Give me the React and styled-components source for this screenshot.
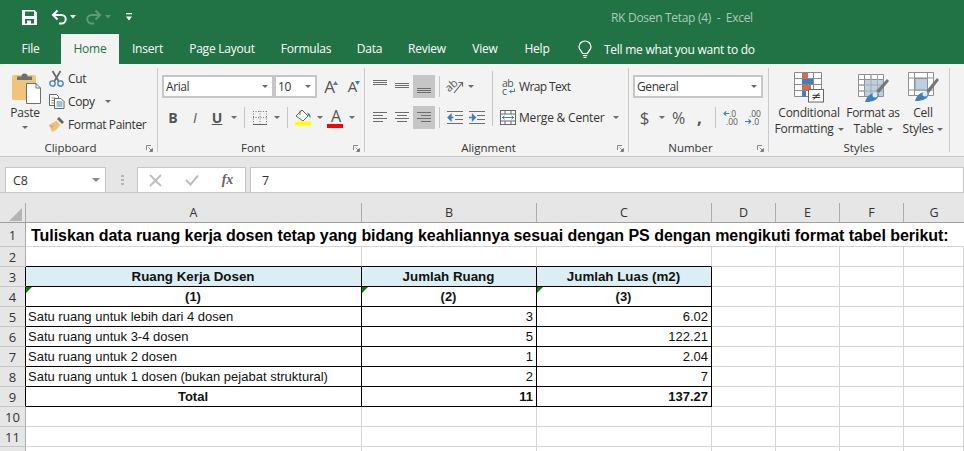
import React from 'react';
import styled, { createGlobalStyle } from 'styled-components';

const UI = '"Open Sans", "Noto Sans", sans-serif';
const GREEN = '#217346';
const GRID = '#d4d4d4';

const Global = createGlobalStyle`
  html, body { margin: 0; padding: 0; background: #fff; overflow: hidden; }
  #root { width: 964px; height: 451px; overflow: hidden; }
`;
const Page = styled.div`width:964px;height:451px;overflow:hidden;font-family:${UI};color:#333;`;

/* title bar */
const TitleBar = styled.div`height:34px;background:${GREEN};display:flex;align-items:center;padding-left:22px;`;
const Qat = styled.div`display:flex;align-items:center;width:589px;`;
const QatBtn = styled.span`display:inline-flex;margin-left:${p => p.$ml || 0}px;`;
const DocTitle = styled.div`font-size:12px;letter-spacing:-.3px;color:#a9cbb8;white-space:pre;`;

/* tabs */
const TabBar = styled.div`height:30px;background:${GREEN};display:flex;`;
const Tab = styled.div`
  width:${p => p.$w}px;flex:none;text-align:center;font-size:12px;line-height:29px;letter-spacing:-.22px;
  color:${p => p.$active ? GREEN : '#fff'};background:${p => p.$active ? '#f3f3f3' : 'transparent'};
`;
const TellMe = styled.div`display:flex;align-items:center;gap:12px;margin-left:15px;font-size:12px;letter-spacing:-.26px;color:#fff;`;

/* ribbon */
const Ribbon = styled.div`height:92px;background:#f3f3f3;border-bottom:1px solid #c9c9c9;display:flex;overflow:hidden;`;
const Group = styled.div`width:${p => p.$w}px;flex:none;display:flex;flex-direction:column;`;
const GroupBody = styled.div`flex:1;display:flex;min-height:0;padding-left:${p => p.$pl || 0}px;`;
const GroupFoot = styled.div`height:16px;display:flex;align-items:center;flex:none;`;
const GroupLabel = styled.div`flex:1;text-align:center;font-size:11.5px;line-height:16px;color:#333;`;
const Launcher = styled.div`width:16px;flex:none;display:flex;justify-content:center;`;
const Divider = styled.div`width:1px;flex:none;margin:4px 0;background:#cacaca;`;

const Big = styled.div`width:${p => p.$w}px;flex:none;display:flex;flex-direction:column;align-items:center;padding-top:8px;`;
const BigIcon = styled.div`
  height:33px;flex:none;display:flex;align-items:${p => p.$align || 'flex-start'};justify-content:center;
  padding-left:${p => p.$pl || 0}px;
`;
const BigText = styled.div`font-size:12px;line-height:16px;color:#333;white-space:nowrap;letter-spacing:-.25px;display:flex;align-items:center;gap:4px;`;
const PasteCaret = styled.div`display:flex;margin-top:5px;`;
const SmallCol = styled.div`display:flex;flex-direction:column;padding-top:3px;margin-left:-1px;`;
const SmallRow = styled.div`height:23px;display:flex;align-items:center;font-size:12px;letter-spacing:-.38px;color:#333;white-space:nowrap;`;
const SmallIcon = styled.div`width:19px;flex:none;display:flex;`;
const Stack = styled.div`display:flex;flex-direction:column;gap:8px;padding-top:11px;`;
const Row = styled.div`height:23px;display:flex;align-items:center;`;
const Combo = styled.div`
  width:${p => p.$w}px;height:23px;box-sizing:border-box;flex:none;background:#fff;border:2px solid #c6c6c6;
  display:flex;align-items:center;justify-content:space-between;padding:0 4px 0 2px;font-size:12px;letter-spacing:-.4px;color:#333;
`;
const Cell = styled.div`
  width:${p => p.$w}px;height:23px;flex:none;display:flex;align-items:center;justify-content:center;
  background:${p => p.$on ? '#c6c6c6' : 'transparent'};
  font-size:${p => p.$fs || 13}px;color:${p => p.$c || '#555'};font-weight:${p => p.$b ? 700 : 400};
  font-style:${p => p.$i ? 'italic' : 'normal'};text-decoration:${p => p.$u ? 'underline' : 'none'};
`;
const Sep = styled.div`width:1px;height:${p => p.$h || 23}px;flex:none;background:#c6c6c6;margin:0 ${p => p.$m ?? 4}px 0 ${p => p.$ml ?? 4}px;`;
const TallSep = styled.div`width:1px;height:55px;margin:7px 0 0 4px;flex:none;background:#c6c6c6;`;
const Caret = styled.span`
  display:inline-block;width:0;height:0;flex:none;border-left:3px solid transparent;border-right:3px solid transparent;
  border-top:3px solid #6a6a6a;margin-left:${p => p.$ml || 0}px;
`;
const NameCaret = styled(Caret)`border-width:4px 4px 0;border-top-color:#8a8a8a;margin-right:5px;`;
const Swatch = styled.div`display:flex;flex-direction:column;align-items:center;line-height:14px;`;
const Bar = styled.div`width:16px;height:4px;background:${p => p.$c};`;
const WrapCol = styled.div`display:flex;flex-direction:column;gap:8px;padding-top:11px;padding-left:5px;`;
const WrapRow = styled.div`height:23px;display:flex;align-items:center;font-size:12px;letter-spacing:${p => p.$ls ?? -.2}px;color:#333;white-space:nowrap;`;
const WrapIcon = styled.div`width:21px;flex:none;display:flex;box-sizing:border-box;padding-left:${p => p.$pl || 0}px;`;
const Grow = styled.span`font-size:${p => p.$fs}px;color:#555;line-height:1;margin-right:-2px;`;

/* formula bar */
const FormulaBar = styled.div`
  height:36px;box-sizing:border-box;background:#e6e6e6;border-bottom:1px solid #c6c6c6;padding:10px 0 0 5px;display:flex;
`;
const Field = styled.div`
  height:25px;box-sizing:border-box;background:#fff;border:1px solid #c6c6c6;border-bottom:0;
  display:flex;align-items:center;font-size:13px;color:#333;flex:${p => p.$grow ? 1 : 'none'};
  width:${p => p.$w ? p.$w + 'px' : 'auto'};margin-left:${p => p.$ml || 0}px;
`;
const NameText = styled.span`flex:1;padding-left:${p => p.$pl || 7}px;font-size:12.5px;`;
const FxBtn = styled.div`width:${p => p.$w}px;flex:none;display:flex;justify-content:center;align-items:center;`;
const Fx = styled.span`font-family:"Liberation Serif",serif;font-style:italic;font-weight:700;font-size:14px;color:#666;`;
const Grip = styled.div`width:3px;height:11px;margin:8px 0 0 15px;flex:none;background:repeating-linear-gradient(#b4b4b4 0 2px,transparent 2px 4px);`;

/* sheet */
const Sheet = styled.div`
  display:grid;
  grid-template-columns:26px 336px 175px 175px 64px 64px 64px 60px;
  grid-template-rows:30px 24px repeat(11,20px);
  background:#fff;
`;
const ColHead = styled.div`background:#e6e6e6;border-bottom:1px solid #a0a0a0;box-sizing:border-box;padding-top:10px;display:flex;`;
const CornerBox = styled.div`flex:1;border-right:1px solid #ababab;display:flex;align-items:flex-end;justify-content:flex-end;padding:0 3px 1px 0;`;
const ColLabel = styled.div`flex:1;border-right:${p => p.$last ? 0 : '1px solid #ababab'};text-align:center;font-size:12.5px;line-height:20px;color:#333;`;
const RowHead = styled.div`
  background:#e6e6e6;box-sizing:border-box;text-align:center;font-size:13px;color:#333;line-height:${p => p.$tall ? 25 : 20}px;
  border-right:1px solid ${p => p.$black ? '#000' : '#ababab'};border-bottom:1px solid #c6c6c6;
`;
const Title = styled.div`
  grid-column:2 / -1;box-sizing:border-box;border-bottom:1px solid ${GRID};padding-left:5px;
  font:700 16px/25px "Liberation Sans",Arial,sans-serif;letter-spacing:-.043px;color:#000;white-space:nowrap;
`;
const Td = styled.div`
  position:relative;box-sizing:border-box;white-space:nowrap;overflow:hidden;
  font:${p => p.$b ? 700 : 400} ${p => p.$fs || 13}px/20px "Liberation Sans",Arial,sans-serif;color:#111;
  background:${p => p.$bg || '#fff'};text-align:${p => p.$a || 'left'};
  padding:0 3px 0 2px;
  border-right:1px solid ${p => p.$box ? '#000' : GRID};
  border-bottom:1px solid ${p => (p.$box || p.$under) ? '#000' : GRID};
  ${p => p.$flag ? `&::before{content:"";position:absolute;left:0;top:0;border-top:6px solid #0f7b0f;border-right:6px solid transparent;}` : ''}
`;

/* icons */
const Svg = ({ w, h, children }) => <svg width={w} height={h} viewBox={`0 0 ${w} ${h}`} style={{ display: 'block', flex: 'none', overflow: 'visible' }}>{children}</svg>;

const SaveIcon = () => <Svg w={15} h={15}><path fill="#fff" fillRule="evenodd" d="M0 0h12.5L15 2.500V15H0zM3 1.500V6h9V1.500zM3 9v4.500h2V10.500h4v3h3V9z" /><rect x="6.500" y="11" width="1.500" height="2.500" fill="#fff" /></Svg>;
const Undo = ({ c, flip }) => <Svg w={16} h={16}><g transform={flip ? 'translate(16 0) scale(-1 1)' : undefined} fill="none" stroke={c} strokeWidth="2"><path d="M6.500 1.500 2 6l4.500 4.500" /><path d="M2 6h8.500a3.700 3.700 0 0 1 0 8.500H8" /></g></Svg>;
const QatCaret = ({ c }) => <Svg w={6} h={4}><path d="M0 0h6L3 3.500z" fill={c} /></Svg>;
const Custom = () => <Svg w={6} h={8}><rect width="6" height="1.300" fill="#fff" /><path d="M0 3.500h6L3 7.500z" fill="#fff" /></Svg>;
const Bulb = () => <Svg w={14} h={17}><g fill="none" stroke="#fff" strokeWidth="1.200"><path d="M4.500 12.500C4 10 1 9 1 6a6 6 0 0 1 12 0c0 3-3 4-3.500 6.500z" /><path d="M4.800 14.500h4.400M5.500 16.300h3" /></g></Svg>;

const PasteIcon = () => <Svg w={29} h={32}>
  <rect x="0" y="3" width="24" height="25" rx="1.500" fill="#efc57c" />
  <path d="M5 8V4.500h4.500a3 3 0 0 1 6 0H20V8z" fill="#6f6f6f" />
  <path d="M14.500 11.500h9.500l4.500 4.500v15.500h-14z" fill="#fff" stroke="#6f6f6f" />
  <path d="M24 11.500V16h4.500" fill="none" stroke="#6f6f6f" />
</Svg>;
const CutIcon = () => <Svg w={15} h={16}>
  <path d="M3.500 0 9.500 10M11.500 0 5.500 10" stroke="#666" strokeWidth="1.700" fill="none" />
  <circle cx="3.500" cy="12.500" r="2.700" fill="none" stroke="#3f7fbf" strokeWidth="1.300" />
  <circle cx="11.500" cy="12.500" r="2.700" fill="none" stroke="#3f7fbf" strokeWidth="1.300" />
</Svg>;
const CopyIcon = () => <Svg w={16} h={15}>
  <path d="M.5.500h7l2 2v9H.5z" fill="#fff" stroke="#666" />
  <path d="M2.500 4h4M2.500 6.500h3M2.500 9h3" stroke="#888" />
  <path d="M5.500 4.500h6.500l3 3v7H5.500z" fill="#fff" stroke="#666" />
  <path d="M7.500 8h6M7.500 10h6M7.500 12h6" stroke="#3f7fbf" />
</Svg>;
const PainterIcon = () => <Svg w={16} h={15}>
  <path d="M9 1l5 5-2 2-5-5z" fill="#666" transform="translate(1 -1)" />
  <path d="M7.500 3.500 11.500 8 7 13 3 15 0 8z" fill="#edc37b" />
  <path d="M0 8l5 1-2 2z" fill="#d7a957" />
</Svg>;
const LauncherIcon = () => <Svg w={7} h={7}>
  <path d="M.5 5V.500H5" fill="none" stroke="#8a8a8a" />
  <path d="M2.500 2.500 6 6M3.500 6.500H6.500V3.500z" stroke="#6f6f6f" fill="#6f6f6f" strokeWidth=".7" />
</Svg>;
const BordersIcon = () => <Svg w={14} h={14}>
  <path d="M.5 0v13M7 0v13M13.500 0v13M0 .5h14M0 6.500h14" stroke="#808080" strokeDasharray="1 1.500" fill="none" />
  <path d="M0 13.500h14" stroke="#666" />
</Svg>;
const FillIcon = () => <Svg w={17} h={17}>
  <path d="M1 7l6-6 6 6-5 5z" fill="#fff" stroke="#666" />
  <path d="M5 1.500V6" stroke="#666" />
  <path d="M12 3.500q4 1 3.500 5.500l-2-2z" fill="#3f7fbf" />
  <rect y="12.500" width="16" height="4" fill="#ffff00" />
</Svg>;
const Lines = ({ ys, widths, align = 'left', h = 23, w = 14 }) => <Svg w={w} h={h}>
  {ys.map((y, i) => {
    const lw = widths[i % widths.length];
    const x = align === 'left' ? 0 : align === 'center' ? (w - lw) / 2 : w - lw;
    return <rect key={i} x={x} y={y} width={lw} height="1" fill="#6e6e6e" />;
  })}
</Svg>;
const AlignRows = [6, 9, 12, 15];
const OrientIcon = () => <Svg w={16} h={17}>
  <text x="-1" y="11" fontSize="11" fontFamily="Open Sans" fill="#555" transform="rotate(-42 5 9)">ab</text>
  <path d="M7 15 15 5M11.500 4.500h4v4" fill="none" stroke="#666" strokeWidth="1.200" />
</Svg>;
const IndentIcon = ({ right }) => <Svg w={16} h={14}>
  <path d="M0 .5h16M8 4.500h8M8 8.500h8M0 12.500h16" stroke="#6e6e6e" />
  {right
    ? <path d="M0 6.500h4.500M3.500 3.500l3 3-3 3z" stroke="#3f7fbf" strokeWidth="1.300" fill="#3f7fbf" />
    : <path d="M6.500 6.500H2M4 3.500l-3 3 3 3z" stroke="#3f7fbf" strokeWidth="1.300" fill="#3f7fbf" />}
</Svg>;
const WrapIconSvg = () => <Svg w={14} h={16}>
  <text fontSize="10.500" fontFamily="Open Sans" fill="#555">
    <tspan x="0" y="7.500">ab</tspan>
    <tspan x="0" y="15.500">c</tspan>
  </text>
  <path d="M12.500 9.500v3H8M9.500 11l-2 1.500 2 1.500" fill="none" stroke="#3f7fbf" />
</Svg>;
const MergeIcon = () => <Svg w={16} h={15}>
  <rect x=".5" y=".5" width="15" height="14" fill="#fff" stroke="#666" />
  <path d="M0 4h16M0 11h16M5 .5V4M11 .5V4M5 11v3.500M11 11v3.500" stroke="#666" />
  <path d="M2.500 7.500h11M4.500 5.800l-2 1.700 2 1.700M11.500 5.800l2 1.700-2 1.700" fill="none" stroke="#3f7fbf" />
</Svg>;
const DecIcon = ({ more }) => <Svg w={15} h={15}>
  <text fontSize="8.500" fontFamily="Open Sans" fill="#555">
    <tspan x={more ? 4 : 6} y="6.500">{more ? '.00' : '.0'}</tspan>
    <tspan x={more ? 7 : 3} y="14.500">{more ? '.0' : '.00'}</tspan>
  </text>
  {more
    ? <path d="M0 11.500h5.500M3.500 9.300l2.200 2.200-2.200 2.200" stroke="#3f7fbf" fill="none" strokeWidth="1.200" />
    : <path d="M6.500 3.500H1M3.200 1.300 1 3.500l2.200 2.200" stroke="#3f7fbf" fill="none" strokeWidth="1.200" />}
</Svg>;
const CondIcon = () => <Svg w={31} h={31}>
  <path d="M.5.500h27v24H.5zM.5 6.500h27M.5 12.500h27M.5 18.500h27M8.500.500v24M19.500.500v24" fill="#fff" stroke="#8a8a8a" />
  <rect x="8" y="1" width="6" height="5" fill="#d8694a" />
  <rect x="8" y="7" width="11" height="5" fill="#3f7fbf" />
  <rect x="8" y="13" width="9" height="5" fill="#d8694a" />
  <rect x="8" y="19" width="4" height="6" fill="#3f7fbf" />
  <rect x="14.500" y="17.500" width="15" height="12.500" fill="#fff" stroke="#666" />
  <text x="22" y="27.500" fontSize="12" textAnchor="middle" fontFamily="DejaVu Sans" fill="#333">≠</text>
</Svg>;
const TableIcon = () => <Svg w={31} h={29}>
  <path d="M.5.500h25v22H.5zM.5 5.500h25M.5 11h25M.5 17h25M6.500.500v22M13 .500v22M19.500.500v22" fill="#fff" stroke="#909090" />
  <path d="M7 6h18v16H7z" fill="#bcd0e4" />
  <path d="M.5 11h25M.5 17h25M13 .500v22M19.500.500v22" stroke="#a8a8a8" fill="none" />
  <path d="M18 17 29 5l2 2-10 12z" fill="#777" />
  <path d="M7 28c2-7 8-11 14-8q-1 8-14 8z" fill="#3f7fbf" />
  <circle cx="17" cy="21" r="2.500" fill="#dbe7f2" />
</Svg>;
const CellIcon = () => <Svg w={31} h={29}>
  <path d="M.5.500h25v23H.5zM.5 6h25M.5 18h25M6.500.500v23M19.500.500v23" fill="#fff" stroke="#909090" />
  <path d="M7 6.500h12.500V18H7z" fill="#bcd0e4" stroke="#909090" />
  <path d="M18 19 29 6l2 2-10 13z" fill="#777" />
  <path d="M7 29c2-7 8-11 14-8q-1 8-14 8z" fill="#3f7fbf" />
  <circle cx="17" cy="22" r="2.500" fill="#dbe7f2" />
</Svg>;
const InsertIcon = () => <Svg w={20} h={28}>
  <rect x=".5" y="1" width="14" height="7" fill="none" stroke="#8a8a8a" />
  <rect x=".5" y="18" width="14" height="9" fill="none" stroke="#8a8a8a" />
  <rect x="0" y="10" width="6" height="3" fill="#3f7fbf" />
</Svg>;
const XIcon = () => <Svg w={13} h={13}><path d="M1 1l11 11M12 1 1 12" stroke="#bdbdbd" strokeWidth="1.800" /></Svg>;
const CheckIcon = () => <Svg w={14} h={12}><path d="M1 6l4.500 4.500L13 1.500" fill="none" stroke="#bdbdbd" strokeWidth="2" /></Svg>;
const CornerTri = () => <Svg w={13} h={13}><path d="M13 0v13H0z" fill="#b4b4b4" /></Svg>;

const Foot = ({ label, launch }) => <GroupFoot><GroupLabel>{label}</GroupLabel>{launch && <Launcher><LauncherIcon /></Launcher>}</GroupFoot>;

const TABS = [['File', 61], ['Home', 58, true], ['Insert', 57], ['Page Layout', 92], ['Formulas', 76], ['Data', 51], ['Review', 64], ['View', 52], ['Help', 52]];
const COLS = ['A', 'B', 'C', 'D', 'E', 'F', 'G'];
const TABLE = {
  3: { head: true, cells: ['Ruang Kerja Dosen', 'Jumlah Ruang', 'Jumlah Luas (m2)'] },
  4: { bold: true, center: true, flag: true, cells: ['(1)', '(2)', '(3)'] },
  5: { cells: ['Satu ruang untuk lebih dari 4 dosen', '3', '6.02'] },
  6: { cells: ['Satu ruang untuk 3-4 dosen', '5', '122.21'] },
  7: { cells: ['Satu ruang untuk 2 dosen', '1', '2.04'] },
  8: { cells: ['Satu ruang untuk 1 dosen (bukan pejabat struktural)', '2', '7'] },
  9: { bold: true, total: true, cells: ['Total', '11', '137.27'] },
};

function SheetRows() {
  const out = [];
  for (let r = 2; r <= 12; r++) {
    const row = TABLE[r];
    out.push(<RowHead key={`h${r}`} $black={!!row}>{r}</RowHead>);
    for (let c = 0; c < 7; c++) {
      const key = `${r}-${c}`;
      if (row && c < 3) {
        const align = row.head || row.center || (row.total && c === 0) ? 'center' : c > 0 ? 'right' : 'left';
        out.push(<Td key={key} $box $b={row.head || row.bold} $fs={row.head ? 13.33 : 13} $a={align} $bg={row.head ? '#daeef3' : undefined} $flag={row.flag}>{row.cells[c]}</Td>);
      } else {
        out.push(<Td key={key} $under={r === 2 && c < 3} />);
      }
    }
  }
  return out;
}

export default function App() {
  return (
    <Page>
      <Global />
      <TitleBar>
        <Qat>
          <SaveIcon />
          <QatBtn $ml={14}><Undo c="#fff" /></QatBtn>
          <QatBtn $ml={3}><QatCaret c="#fff" /></QatBtn>
          <QatBtn $ml={10}><Undo c="#5d9a79" flip /></QatBtn>
          <QatBtn $ml={3}><QatCaret c="#5d9a79" /></QatBtn>
          <QatBtn $ml={15}><Custom /></QatBtn>
        </Qat>
        <DocTitle>RK Dosen Tetap (4)  -  Excel</DocTitle>
      </TitleBar>
      <TabBar>
        {TABS.map(([t, w, a]) => <Tab key={t} $w={w} $active={a}>{t}</Tab>)}
        <TellMe><Bulb /><span>Tell me what you want to do</span></TellMe>
      </TabBar>
      <Ribbon>
        <Group $w={157}>
          <GroupBody>
            <Big $w={50}>
              <BigIcon $pl={3}><PasteIcon /></BigIcon>
              <BigText>Paste</BigText>
              <PasteCaret><Caret /></PasteCaret>
            </Big>
            <SmallCol>
              <SmallRow><SmallIcon><CutIcon /></SmallIcon>Cut</SmallRow>
              <SmallRow><SmallIcon><CopyIcon /></SmallIcon>Copy<Caret $ml={10} /></SmallRow>
              <SmallRow><SmallIcon><PainterIcon /></SmallIcon>Format Painter</SmallRow>
            </SmallCol>
          </GroupBody>
          <Foot label="Clipboard" launch />
        </Group>
        <Divider />
        <Group $w={206}>
          <GroupBody $pl={4}>
            <Stack>
              <Row>
                <Combo $w={112}>Arial<Caret /></Combo>
                <Combo $w={43}>10<Caret /></Combo>
                <Cell $w={28}><Grow $fs={17}>A</Grow><Svg w={5} h={12}><path d="M0 4 2.500 0 5 4z" fill="#3f7fbf" /></Svg></Cell>
                <Cell $w={18}><Grow $fs={15}>A</Grow><Svg w={5} h={12}><path d="M0 0h5L2.500 4z" fill="#3f7fbf" /></Svg></Cell>
              </Row>
              <Row>
                <Cell $w={22} $b $fs={14}>B</Cell>
                <Cell $w={22} $i $fs={14}>I</Cell>
                <Cell $w={22} $u $b $fs={14}>U</Cell>
                <Cell $w={11}><Caret /></Cell>
                <Sep $ml={5} $m={3} $h={21} />
                <Cell $w={23}><BordersIcon /></Cell>
                <Cell $w={11}><Caret /></Cell>
                <Sep $ml={5} $m={4} $h={21} />
                <Cell $w={23}><FillIcon /></Cell>
                <Cell $w={9}><Caret /></Cell>
                <Cell $w={22}>
                  <Swatch><Grow $fs={16}>A</Grow><Bar $c="#ff0000" /></Swatch>
                </Cell>
                <Cell $w={12}><Caret /></Cell>
              </Row>
            </Stack>
          </GroupBody>
          <Foot label="Font" launch />
        </Group>
        <Divider />
        <Group $w={263}>
          <GroupBody $pl={4}>
            <Stack>
              <Row>
                <Cell $w={22}><Lines ys={[5, 7, 9]} widths={[14]} /></Cell>
                <Cell $w={22}><Lines ys={[8, 10, 12]} widths={[14]} /></Cell>
                <Cell $w={22} $on><Lines ys={[13, 15, 17]} widths={[14]} /></Cell>
                <Sep $h={21} />
                <Cell $w={22}><OrientIcon /></Cell>
                <Cell $w={9}><Caret /></Cell>
              </Row>
              <Row>
                <Cell $w={22}><Lines ys={AlignRows} widths={[14, 10]} /></Cell>
                <Cell $w={22}><Lines ys={AlignRows} widths={[14, 10]} align="center" /></Cell>
                <Cell $w={22} $on><Lines ys={AlignRows} widths={[14, 10]} align="right" /></Cell>
                <Sep $h={21} />
                <Cell $w={22}><IndentIcon /></Cell>
                <Cell $w={22}><IndentIcon right /></Cell>
              </Row>
            </Stack>
            <TallSep />
            <WrapCol>
              <WrapRow $ls={-.62}><WrapIcon $pl={4}><WrapIconSvg /></WrapIcon>Wrap Text</WrapRow>
              <WrapRow><WrapIcon $pl={2}><MergeIcon /></WrapIcon>Merge &amp; Center<Caret $ml={9} /></WrapRow>
            </WrapCol>
          </GroupBody>
          <Foot label="Alignment" launch />
        </Group>
        <Divider />
        <Group $w={139}>
          <GroupBody $pl={4}>
            <Stack>
              <Row><Combo $w={130}>General<Caret /></Combo></Row>
              <Row>
                <Cell $w={23} $fs={17}>$</Cell>
                <Cell $w={11}><Caret /></Cell>
                <Cell $w={23} $fs={16}>%</Cell>
                <Cell $w={19} $fs={17} $b>,</Cell>
                <Sep $ml={6} $m={3} $h={21} />
                <Cell $w={22}><DecIcon /></Cell>
                <Cell $w={22}><DecIcon more /></Cell>
              </Row>
            </Stack>
          </GroupBody>
          <Foot label="Number" launch />
        </Group>
        <Divider />
        <Group $w={180}>
          <GroupBody $pl={6}>
            <Big $w={68}>
              <BigIcon><CondIcon /></BigIcon>
              <BigText>Conditional</BigText>
              <BigText>Formatting<Caret /></BigText>
            </Big>
            <Big $w={60}>
              <BigIcon $align="center"><TableIcon /></BigIcon>
              <BigText>Format as</BigText>
              <BigText>Table<Caret /></BigText>
            </Big>
            <Big $w={40}>
              <BigIcon><CellIcon /></BigIcon>
              <BigText>Cell</BigText>
              <BigText>Styles<Caret /></BigText>
            </Big>
          </GroupBody>
          <Foot label="Styles" />
        </Group>
        <Divider />
        <Group $w={14}>
          <GroupBody $pl={11}>
            <Big $w={40}>
              <BigIcon><InsertIcon /></BigIcon>
              <BigText>Insert</BigText>
            </Big>
          </GroupBody>
        </Group>
      </Ribbon>
      <FormulaBar>
        <Field $w={101}><NameText>C8</NameText><NameCaret /></Field>
        <Grip />
        <Field $w={109} $ml={13}>
          <FxBtn $w={34}><XIcon /></FxBtn>
          <FxBtn $w={40}><CheckIcon /></FxBtn>
          <FxBtn $w={31}><Fx>fx</Fx></FxBtn>
        </Field>
        <Field $grow $ml={4}><NameText $pl={11}>7</NameText></Field>
      </FormulaBar>
      <Sheet>
        <ColHead><CornerBox><CornerTri /></CornerBox></ColHead>
        {COLS.map((c, i) => <ColHead key={c}><ColLabel $last={i === 6}>{c}</ColLabel></ColHead>)}
        <RowHead $tall>1</RowHead>
        <Title>Tuliskan data ruang kerja dosen tetap yang bidang keahliannya sesuai dengan PS dengan mengikuti format tabel berikut:</Title>
        <SheetRows />
      </Sheet>
    </Page>
  );
}
